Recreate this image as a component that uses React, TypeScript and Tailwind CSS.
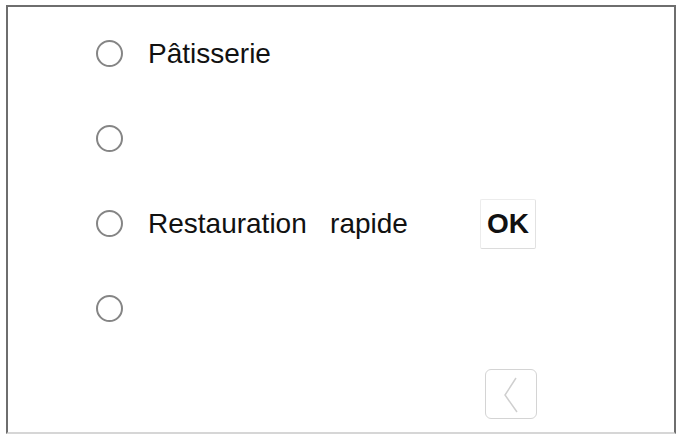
import { ReactNode } from 'react';

type RowProps = {
  label?: string;
  children?: ReactNode;
};

function RadioRow({ label, children }: RowProps) {
  return (
    <div className="flex h-[85px] items-center">
      <span className="h-[27px] w-[27px] shrink-0 rounded-full border-2 border-[#858585]" />
      {label && (
        <span className="ml-[25px] whitespace-pre text-[28px] leading-none text-[#111]">{label}</span>
      )}
      {children}
    </div>
  );
}

export default function App() {
  return (
    <div className="h-[435px] w-[679px] overflow-hidden bg-white font-['Liberation_Sans',Arial,sans-serif]">
      <div className="ml-[6px] mt-[5px] h-[429px] w-[670px] border-2 border-[#6e6e6e] border-b-[#d6d6d6] pl-[88px] pt-[4px]">
        <RadioRow label="Pâtisserie" />
        <RadioRow />
        <RadioRow label="Restauration   rapide">
          <button className="ml-[72px] flex h-[50px] w-[56px] items-center justify-center rounded-[2px] border border-[#ececec] border-b-[#dcdcdc] border-r-[#e2e2e2] bg-white text-[28px] font-bold leading-none text-[#111]">
            OK
          </button>
        </RadioRow>
        <RadioRow />
        <div className="flex pl-[389px] pt-[18px]">
          <button className="flex h-[50px] w-[52px] items-center justify-center rounded-[6px] border-[1.5px] border-[#d4d4d4] bg-white">
            <svg width="20" height="40" viewBox="0 0 20 40" fill="none">
              <path d="M15 4 L4 21 L16 38" stroke="#cfcfcf" strokeWidth="1.5" />
            </svg>
          </button>
        </div>
      </div>
    </div>
  );
}
